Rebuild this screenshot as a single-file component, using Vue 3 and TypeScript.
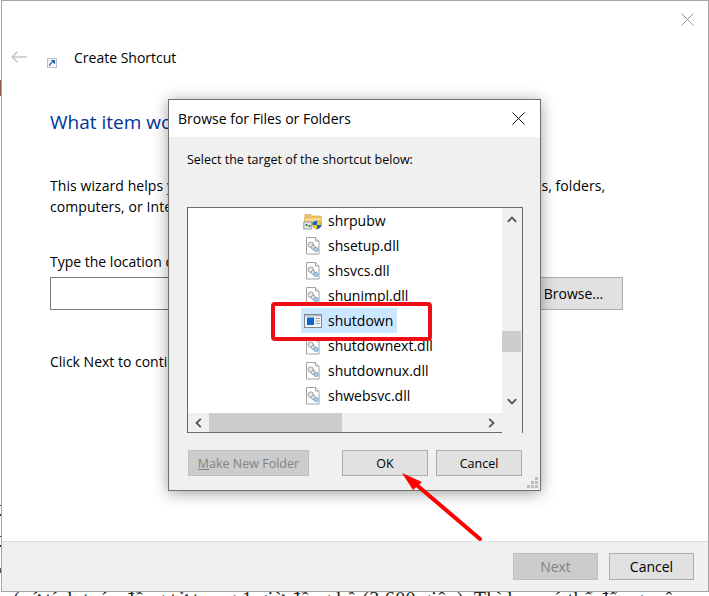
<script setup lang="ts">
interface Row { name: string; icon: 'folder' | 'dll' | 'app'; selected?: boolean }
const rows: Row[] = [
  { name: 'shrpubw', icon: 'folder' },
  { name: 'shsetup.dll', icon: 'dll' },
  { name: 'shsvcs.dll', icon: 'dll' },
  { name: 'shunimpl.dll', icon: 'dll' },
  { name: 'shutdown', icon: 'app', selected: true },
  { name: 'shutdownext.dll', icon: 'dll' },
  { name: 'shutdownux.dll', icon: 'dll' },
  { name: 'shwebsvc.dll', icon: 'dll' },
]
const grip = [[8, 0], [4, 4], [8, 4], [0, 8], [4, 8], [8, 8]]
const edgeMarks = [
  { y: 80, h: 16, color: '#8a5a50' },
  { y: 505, h: 1, color: '#333' },
  { y: 514, h: 2, color: '#333' },
  { y: 536, h: 1, color: '#333' },
  { y: 545, h: 2, color: '#333' },
  { y: 568, h: 5, color: '#555' },
]
</script>

<template>
  <div class="page">
    <p class="behind behind-bottom">(cứ tính toán đồng tử trong 1 giờ đồng hồ (3.600 giây). Thì bạn có thể để nguyên</p>

    <section class="wizard">
      <div class="wizard-main">
        <header class="wizard-head">
          <svg class="back" width="16" height="12" viewBox="0 0 16 12">
            <path d="M6.500 .8 1.200 6l5.300 5.200M1.200 6H16" fill="none" stroke="#c6c6c6" stroke-width="1.600" />
          </svg>
          <svg class="shortcut" width="10" height="10" viewBox="0 0 10 10">
            <rect x=".5" y=".5" width="9" height="9" fill="#f4f6f8" stroke="#b9bfc6" />
            <path d="M2.500 8C2.500 5.500 4 4.500 5.500 4.500M4.600 2.600h3v3z" fill="#1f5fa8" stroke="#1f5fa8" />
          </svg>
          <span class="wizard-title">Create Shortcut</span>
          <svg class="close" width="13" height="13" viewBox="0 0 13 13">
            <path d="M.5.5l12 12M12.500.5l-12 12" stroke="#999" fill="none" />
          </svg>
        </header>
        <h1 class="question">What item would you like to create a shortcut for?</h1>
        <p class="intro">This wizard helps you to create shortcuts to local or network programs, files, folders, computers, or Internet addresses.</p>
        <label class="loc-label">Type the location of the item:</label>
        <div class="loc-row">
          <input class="loc-input" type="text" />
          <button class="btn browse">Browse...</button>
        </div>
        <p class="next-hint">Click Next to continue.</p>
      </div>
      <footer class="wizard-foot">
        <button class="btn foot-btn" disabled>Next</button>
        <button class="btn foot-btn">Cancel</button>
      </footer>
    </section>

    <p class="behind behind-top">gấp phần mềm hẹn giờ</p>
    <span v-for="m in edgeMarks" :key="m.y" class="edge" :style="{ top: m.y + 'px', height: m.h + 'px', background: m.color }"></span>

    <section class="dialog">
      <header class="dlg-title">
        <span>Browse for Files or Folders</span>
        <svg width="13" height="13" viewBox="0 0 13 13">
          <path d="M.5.5l12 12M12.500.5l-12 12" stroke="#111" fill="none" />
        </svg>
      </header>
      <div class="dlg-body">
        <p class="dlg-prompt">Select the target of the shortcut below:</p>
        <div class="tree">
          <ul class="tree-list">
            <li v-for="row in rows" :key="row.name" class="tree-row">
              <span class="item" :class="{ selected: row.selected }">
                <svg v-if="row.icon === 'folder'" class="ico" width="20" height="20" viewBox="0 0 20 20">
                  <path d="M2 5V3.500h6l1.500 1.500H18V9H2z" fill="#f0c868" stroke="#c9a04c" stroke-width=".6" />
                  <path d="M1.500 6.500h17v8h-17z" fill="#f6d98a" stroke="#d3ab5a" stroke-width=".6" />
                  <rect x=".8" y="11" width="8" height="7" fill="#e4e8e4" stroke="#7d8790" stroke-width=".8" />
                  <path d="M2.500 13h2v2h-2zM5.500 14h2v2h-2z" fill="#4a7a55" />
                  <path d="M14 9.500l4.500 1.600v3c0 2.300-2 3.700-4.500 4.400-2.500-.7-4.500-2.100-4.500-4.400v-3z" fill="#1c62b8" />
                  <path d="M14 9.500l4.500 1.600v3H14zM14 14.100v4.400c-2.500-.7-4.500-2.100-4.500-4.400z" fill="#f2c230" />
                </svg>
                <svg v-else-if="row.icon === 'dll'" class="ico" width="20" height="20" viewBox="0 0 20 20">
                  <path d="M3.500 1.500h9l3.500 3.500v13H3.500z" fill="#fff" stroke="#a2a2a2" />
                  <path d="M12.500 1.500V5H16" fill="#eee" stroke="#a2a2a2" />
                  <circle cx="7.800" cy="8.700" r="2.600" fill="#e8e8e8" stroke="#8f8f8f" stroke-width="1.200" stroke-dasharray="1.300 .6" />
                  <circle cx="10.300" cy="11.500" r="2.100" fill="#dcdcdc" stroke="#8a8a8a" stroke-width="1" stroke-dasharray="1.100 .5" />
                  <circle cx="13" cy="13.500" r="2.100" fill="#a9d0ef" stroke="#5b9ad0" stroke-width=".8" />
                </svg>
                <svg v-else class="ico" width="20" height="20" viewBox="0 0 20 20">
                  <rect x="1.500" y="3.500" width="17" height="13" fill="#f1f4f6" stroke="#7f8890" />
                  <path d="M2 4h16v1.500H2z" fill="#b9c0c6" />
                  <rect x="4" y="6.500" width="7" height="7.500" fill="#0a68d0" />
                  <path d="M12.500 7.500h4.500M12.500 10h4.500M12.500 12.500h4.500" stroke="#9aa3ab" />
                </svg>
                <span class="item-name">{{ row.name }}</span>
              </span>
            </li>
          </ul>
          <div class="vscroll">
            <svg width="10" height="7" viewBox="0 0 10 7"><path d="M.8 5.800 5 1.500l4.200 4.300" fill="none" stroke="#555" stroke-width="1.800" /></svg>
            <span class="vtrack"><span class="vthumb"></span></span>
            <svg width="10" height="7" viewBox="0 0 10 7"><path d="M.8 1.200 5 5.500l4.200-4.300" fill="none" stroke="#555" stroke-width="1.800" /></svg>
          </div>
          <div class="hscroll">
            <svg width="7" height="10" viewBox="0 0 7 10"><path d="M5.800.8 1.500 5l4.300 4.200" fill="none" stroke="#555" stroke-width="1.800" /></svg>
            <span class="htrack"><span class="hthumb"></span></span>
            <svg width="7" height="10" viewBox="0 0 7 10"><path d="M1.200.8 5.500 5 1.200 9.200" fill="none" stroke="#555" stroke-width="1.800" /></svg>
          </div>
          <span class="corner"></span>
        </div>
        <div class="dlg-actions">
          <button class="btn make" disabled><u>M</u>ake New Folder</button>
          <span class="dlg-right">
            <button class="btn dlg-btn">OK</button>
            <button class="btn dlg-btn">Cancel</button>
          </span>
        </div>
      </div>
      <svg class="grip" width="11" height="11" viewBox="0 0 11 11">
        <rect v-for="g in grip" :key="g.join()" :x="g[0]" :y="g[1]" width="3" height="3" fill="#bdbdbd" />
      </svg>
    </section>

    <svg class="annotation" width="709" height="596" viewBox="0 0 709 596">
      <rect x="273" y="304" width="157" height="35" rx="2" fill="none" stroke="#ef0d16" stroke-width="4" />
      <path d="M480 539 412 481" stroke="#f00" stroke-width="4" stroke-linecap="round" fill="none" />
      <path d="M402 473 422 482 413 490z" fill="#f00" />
    </svg>
  </div>
</template>

<style>
html, body { margin: 0; background: #fff; }
</style>

<style scoped>
.page {
  position: relative;
  width: 709px;
  height: 596px;
  overflow: hidden;
  background: #fff;
  font-family: "Open Sans", "Noto Sans", sans-serif;
  color: #000;
}
.behind {
  position: absolute;
  margin: 0;
  font: 18px "Liberation Serif", serif;
  white-space: nowrap;
  color: #222;
}
.behind-top { left: 60px; top: -20px; letter-spacing: .5px; }
.behind-bottom { left: 13px; top: 588px; font-size: 20px; letter-spacing: .3px; }
.edge { position: absolute; left: 0; width: 1px; }
.wizard {
  position: absolute;
  inset: 0 0 4px 1px;
  display: flex;
  flex-direction: column;
  box-sizing: border-box;
  border: 1px solid #a6a6a6;
  background: #fff;
}
.wizard-main { flex: 1; padding-left: 48px; font-size: 14px; }
.wizard-head {
  display: flex;
  align-items: center;
  height: 0;
  margin: 56px 0 0 -39px;
}
.back { flex: none; }
.shortcut { flex: none; margin: 11px 0 0 20px; }
.wizard-title { margin-left: 17px; }
.close { position: absolute; left: 679px; top: 12px; }
.question {
  margin: 51px 0 0;
  font-size: 19px;
  font-weight: 400;
  line-height: 28px;
  color: #039;
  white-space: nowrap;
}
.intro { margin: 39px 0 0; width: 575px; line-height: 21px; letter-spacing: .07px; }
.loc-label { display: block; margin-top: 35px; line-height: 20px; }
.loc-row { display: flex; align-items: stretch; gap: 7px; height: 33px; margin-top: 5px; width: 573px; }
.loc-input { flex: 1; min-width: 0; box-sizing: border-box; border: 1px solid #7a7a7a; background: #fff; }
.btn {
  box-sizing: border-box;
  padding: 0;
  border: 1px solid #adadad;
  background: #e1e1e1;
  color: #000;
  font: inherit;
}
.btn:disabled { background: #ccc; border-color: #bfbfbf; color: #838383; }
.browse { flex: none; width: 99px; }
.next-hint { margin: 42px 0 0; line-height: 20px; }
.wizard-foot {
  flex: none;
  display: flex;
  justify-content: flex-end;
  gap: 11px;
  box-sizing: border-box;
  height: 50px;
  padding: 11px 14px 0 0;
  border-top: 1px solid #dfdfdf;
  background: #f0f0f0;
  font-size: 14px;
}
.foot-btn { width: 85px; height: 27px; }
.dialog {
  position: absolute;
  left: 168px;
  top: 99px;
  width: 373px;
  height: 392px;
  box-sizing: border-box;
  display: flex;
  flex-direction: column;
  border: 1px solid #6f6f6f;
  background: #f0f0f0;
  box-shadow: 0 2px 14px rgba(0, 0, 0, .38);
  font-size: 12.500px;
}
.dlg-title {
  flex: none;
  display: flex;
  align-items: center;
  justify-content: space-between;
  height: 37px;
  padding: 0 15px 0 9px;
  background: #fff;
  font-size: 14px;
}
.dlg-body { flex: 1; padding: 0 18px; }
.dlg-prompt { margin: 14px 0 0; line-height: 18px; }
.tree {
  display: grid;
  grid-template-columns: 1fr 20px;
  grid-template-rows: 205px 20px;
  box-sizing: border-box;
  width: 336px;
  height: 226px;
  margin-top: 38px;
  border: 1px solid #696969;
  background: #f0f0f0;
  font-size: 14px;
}
.tree-list {
  list-style: none;
  margin: 0;
  padding: 0 0 0 113px;
  background: #fff;
  overflow: hidden;
}
.tree-row { height: 25px; }
.item { display: inline-flex; align-items: center; gap: 5px; height: 25px; padding: 0 4px 0 2px; }
.item.selected { background: #cce8ff; }
.ico { flex: none; }
.vscroll, .hscroll { display: flex; align-items: center; justify-content: space-between; }
.vscroll { flex-direction: column; padding: 8px 0; }
.hscroll { padding: 0 7px; }
.vtrack { flex: 1; width: 100%; padding-top: 108px; }
.vthumb { display: block; width: 19px; height: 21px; background: #cdcdcd; }
.htrack { flex: 1; height: 100%; padding-left: 7px; }
.hthumb { display: block; width: 133px; height: 19px; background: #cdcdcd; }
.corner { background: #f0f0f0; }
.dlg-actions { display: flex; justify-content: space-between; margin: 17px 0 0 1px; width: 334px; }
.make { width: 121px; height: 26px; font-size: 12.500px; }
.dlg-right { display: flex; gap: 8px; }
.dlg-btn { width: 86px; height: 26px; }
.grip { position: absolute; right: 2px; bottom: 2px; }
.annotation { position: absolute; left: 0; top: 0; pointer-events: none; }
</style>
